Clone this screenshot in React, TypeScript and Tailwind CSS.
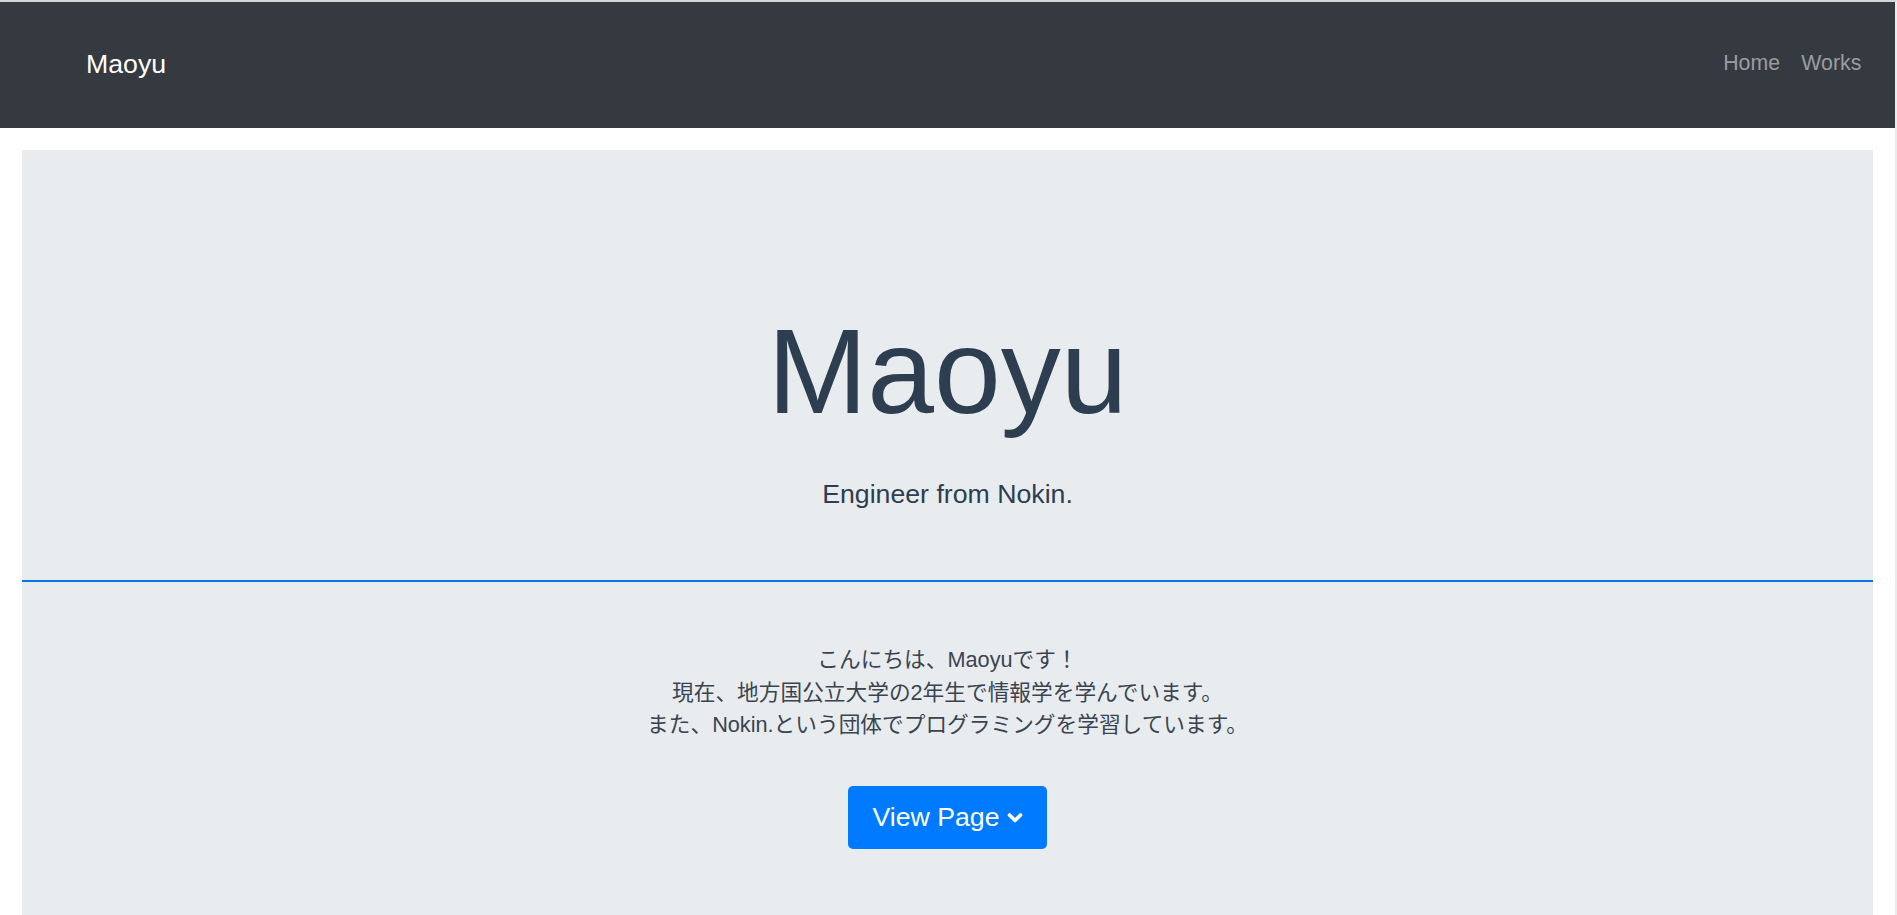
const font = { fontFamily: '"Liberation Sans", "Noto Sans CJK JP", sans-serif' }

function ChevronIcon() {
  return (
    <svg width="16" height="12" viewBox="0 0 16 12" className="mt-[2px]">
      <polyline
        points="2.5,3 8,8.5 13.5,3"
        fill="none"
        stroke="white"
        strokeWidth="3.6"
        strokeLinecap="round"
        strokeLinejoin="round"
      />
    </svg>
  )
}

export default function App() {
  return (
    <div
      className="min-h-screen bg-white border-t-2 border-[#d4d4d4] border-r-2 border-r-[#ececec] overflow-hidden"
      style={font}
    >
      <nav className="h-[126px] bg-[#343a40] flex items-center justify-between pl-[86px] pr-[23px]">
        <a className="text-[26.7px] text-white leading-none pb-[2px]">Maoyu</a>
        <div className="flex items-center pb-[2px]">
          <a className="px-[10.7px] text-[21.3px] text-[#9a9da0] leading-none">Home</a>
          <a className="px-[10.7px] text-[21.3px] text-[#9a9da0] leading-none">Works</a>
        </div>
      </nav>

      <main className="px-[22px] pt-[22px]">
        <section className="bg-[#e9ecef] text-center text-[#2c3e50] pb-[80px]">
          <div className="pt-[149px]">
            <h1 className="text-[120px] leading-[144px] font-normal">Maoyu</h1>
            <p className="mt-[31px] text-[26.7px] leading-[40px]">Engineer from Nokin.</p>
          </div>

          <hr className="mt-[66px] border-0 h-[2px] bg-[#0a74e6]" />

          <div className="pt-[62px] text-[21.7px] leading-[32.5px] text-[#3a4450]">
            <p>こんにちは、Maoyuです！</p>
            <p>現在、地方国公立大学の2年生で情報学を学んでいます。</p>
            <p>また、Nokin.という団体でプログラミングを学習しています。</p>
          </div>

          <div className="mt-[44px] flex justify-center">
            <button className="h-[63px] w-[199px] rounded-[5px] bg-[#007bff] text-white text-[26.7px] flex items-center justify-center gap-[7px]">
              <span>View Page</span>
              <ChevronIcon />
            </button>
          </div>
        </section>
      </main>
    </div>
  )
}
